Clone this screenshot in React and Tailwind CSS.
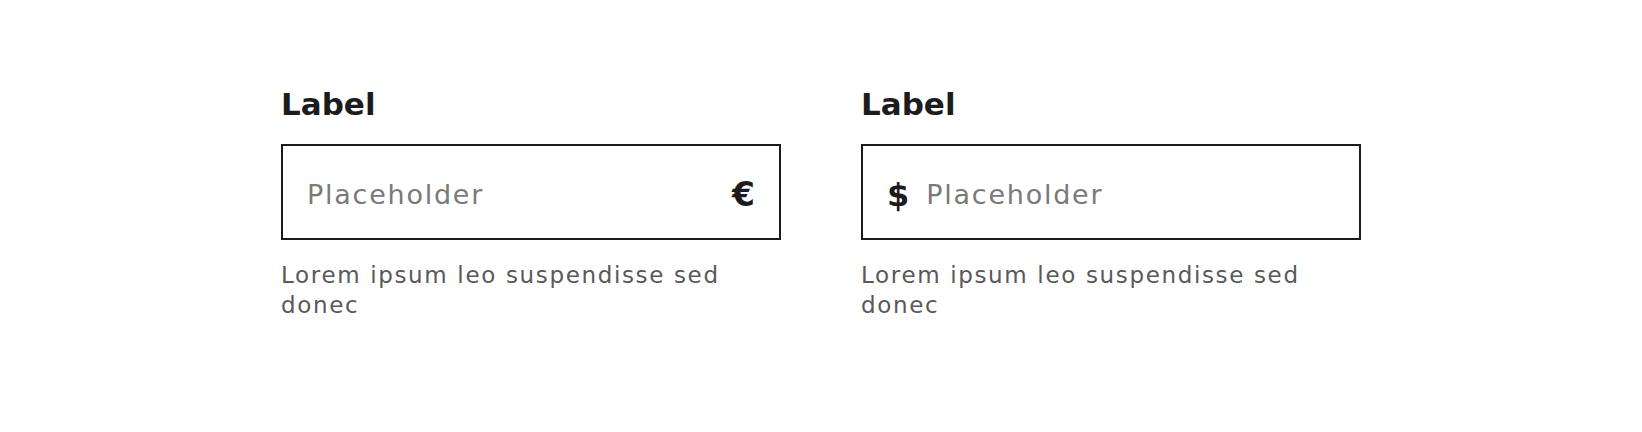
import React from "react";

const font = { fontFamily: '"DejaVu Sans", "Liberation Sans", sans-serif' };

function Field({ symbol, symbolSide }) {
  return (
    <div className="w-[500px] flex flex-col">
      <label className="text-[31px] leading-[36px] font-bold text-[#1c1c1c]">Label</label>
      <div className="mt-[22px] h-[96px] border-2 border-[#1c1c1c] flex items-center px-6 pt-[6px] gap-[17px]">
        {symbolSide === "left" && (
          <span className="text-[32px] leading-[34px] font-bold text-[#1c1c1c]">{symbol}</span>
        )}
        <input
          type="text"
          placeholder="Placeholder"
          className="flex-1 min-w-0 bg-transparent outline-none text-[27px] leading-[32px] tracking-[1.75px] text-[#1c1c1c] placeholder:text-[#7a7a7a]"
          style={font}
        />
        {symbolSide === "right" && (
          <span className="text-[33px] leading-[34px] font-bold text-[#1c1c1c]">{symbol}</span>
        )}
      </div>
      <p className="mt-5 text-[23px] leading-[30px] tracking-[1.65px] text-[#595959]">
        Lorem ipsum leo suspendisse sed donec
      </p>
    </div>
  );
}

export default function App() {
  return (
    <div className="min-h-[432px] w-full bg-white flex justify-center gap-[80px] pt-[86px]" style={font}>
      <Field symbol="€" symbolSide="right" />
      <Field symbol="$" symbolSide="left" />
    </div>
  );
}
